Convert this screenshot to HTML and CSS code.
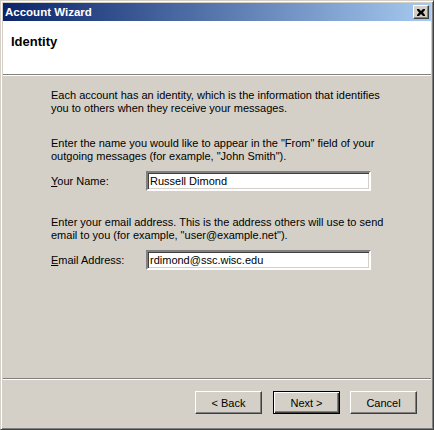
FILE: index.html
```html
<!DOCTYPE html>
<html lang="en">
<head>
    <meta charset="UTF-8">
    <title>Account Wizard</title>
    <link rel="stylesheet" href="styles.css">
</head>
<body>
    <div class="window">
        <div class="titlebar">
            <span class="title">Account Wizard</span>
            <button class="close-btn" aria-label="Close">
                <svg width="8" height="7" viewBox="0 0 8 7">
                    <path d="M0 0h2l2 2 2-2h2v1l-2 2.5 2 2.5v1h-2l-2-2-2 2h-2v-1l2-2.5-2-2.5z" fill="#000"/>
                </svg>
            </button>
        </div>

        <div class="header">
            <h2>Identity</h2>
        </div>
        <div class="separator"></div>

        <div class="content">
            <p>Each account has an identity, which is the information that identifies you to others when they receive your messages.</p>

            <p class="gap-lg">Enter the name you would like to appear in the "From" field of your outgoing messages (for example, "John Smith").</p>
            <div class="field">
                <label for="name"><u>Y</u>our Name:</label>
                <input type="text" id="name" value="Russell Dimond">
            </div>

            <p class="gap-lg gap-xl">Enter your email address. This is the address others will use to send email to you (for example, "user@example.net").</p>
            <div class="field">
                <label for="email"><u>E</u>mail Address:</label>
                <input type="text" id="email" value="rdimond@ssc.wisc.edu">
            </div>
        </div>

        <div class="separator"></div>
        <div class="buttons">
            <button class="btn back">&lt; Back</button>
            <button class="btn default">Next &gt;</button>
            <button class="btn">Cancel</button>
        </div>
    </div>
</body>
</html>
```

FILE: styles.css
```css
html, body {
    margin: 0;
    padding: 0;
}
body {
    font-family: "Liberation Sans", Arial, sans-serif;
    font-size: 11px;
    color: #000;
    background: #d4d0c8;
}
.window {
    width: 434px;
    height: 430px;
    box-sizing: border-box;
    border: 1px solid;
    border-color: #d4d0c8 #404040 #404040 #d4d0c8;
    box-shadow: inset 1px 1px #fff, inset -1px -1px #808080;
    padding: 2px;
    background: #d4d0c8;
    display: flex;
    flex-direction: column;
}
.titlebar {
    height: 18px;
    background: linear-gradient(to right, #0a246a, #a6caf0);
    display: flex;
    align-items: center;
    justify-content: space-between;
    padding: 0 2px 0 2px;
}
.title {
    color: #fff;
    font-weight: bold;
    font-size: 11.5px;
}
.close-btn {
    width: 16px;
    height: 14px;
    padding: 0;
    background: #d4d0c8;
    border: 1px solid;
    border-color: #fff #404040 #404040 #fff;
    box-shadow: inset -1px -1px #808080;
    display: flex;
    align-items: center;
    justify-content: center;
}
.header {
    height: 53px;
    background: #fff;
    padding: 0 8px;
    box-sizing: border-box;
}
.header h2 {
    margin: 0;
    padding-top: 13px;
    font-size: 13px;
    font-weight: bold;
}
.separator {
    height: 1px;
    background: #808080;
    border-bottom: 1px solid #fff;
    flex-shrink: 0;
}
.content {
    flex: 1;
    padding: 13px 0 0 48px;
}
.content p {
    margin: 0;
    width: 335px;
    line-height: 13px;
}
.content p.gap-lg {
    margin-top: 22px;
}
.content p.gap-xl {
    margin-top: 25px;
}
.field {
    display: flex;
    align-items: center;
    margin-top: 8px;
}
.field label {
    width: 95px;
}
.field input {
    width: 225px;
    height: 20px;
    box-sizing: border-box;
    margin: 0;
    padding: 0 2px;
    font-family: inherit;
    font-size: 11px;
    border: 2px solid;
    border-color: #808080 #fff #fff #808080;
    box-shadow: inset 1px 1px #404040, inset -1px -1px #d4d0c8;
    outline: none;
}
.buttons {
    height: 47px;
    display: flex;
    justify-content: flex-end;
    align-items: flex-start;
    gap: 10px;
    padding: 11px 14px 0 0;
    box-sizing: border-box;
}
.btn {
    width: 67px;
    height: 23px;
    padding: 0;
    font-family: inherit;
    font-size: 11px;
    color: #000;
    background: #d4d0c8;
    border: 1px solid;
    border-color: #fff #404040 #404040 #fff;
    box-shadow: inset -1px -1px #808080;
}
.btn.back {
    margin-right: 1px;
}
.btn.default {
    border: 1px solid #000;
    box-shadow: inset 1px 1px #fff, inset -1px -1px #404040, inset -2px -2px #808080;
}
```
